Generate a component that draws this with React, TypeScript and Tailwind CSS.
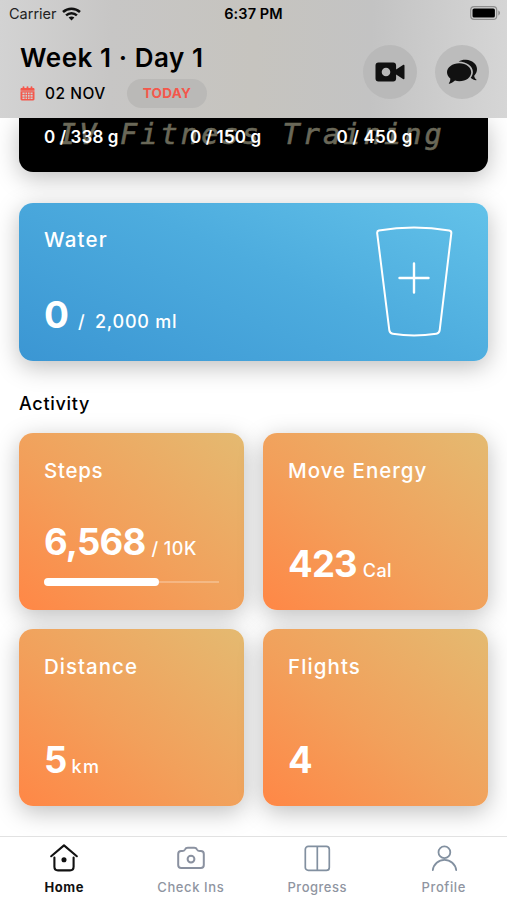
import type { ReactNode } from "react";
import clsx from "clsx";

interface Macro {
  label: string;
  className: string;
}

interface StatCardProps {
  title: string;
  titleClassName: string;
  children: ReactNode;
}

interface TabProps {
  label: string;
  labelClassName: string;
  active?: boolean;
  children: ReactNode;
}

const macros: Macro[] = [
  { label: "0 / 338 g", className: "w-[146px] tracking-[0.1px]" },
  { label: "0 / 150 g", className: "w-[146.5px] tracking-[0.1px]" },
  { label: "0 / 450 g", className: "tracking-[0.2px]" },
];

const steps = { value: 6568, goal: 10000 };

function WifiIcon() {
  return (
    <svg width="19" height="14" viewBox="0 0 19 14" fill="none" stroke="#111" strokeWidth="2.5">
      <path d="M1 5C5.8.5 13.2.5 18 5" />
      <path d="M4.1 8.3C7.2 5.4 11.8 5.4 14.9 8.3" />
      <path d="M9.5 13.6 6.6 10.6C8.3 9.2 10.7 9.2 12.4 10.6Z" fill="#111" stroke="none" />
    </svg>
  );
}

function BatteryIcon() {
  return (
    <svg width="31" height="14" viewBox="0 0 31 14">
      <rect x=".7" y=".7" width="26" height="12.6" rx="3.4" fill="none" stroke="#8e8e8e" strokeWidth="1.2" />
      <rect x="2.5" y="2.5" width="22.4" height="9" rx="1.6" fill="#000" />
      <path d="M28.3 4.6C30.6 5.4 30.6 8.6 28.3 9.4Z" fill="#8e8e8e" />
    </svg>
  );
}

function CalendarIcon() {
  return (
    <svg width="15" height="15" viewBox="0 0 15 15" fill="#f4574b">
      <path d="M.5 4.7V3.2C.5 2.4 1 2 1.7 2H2.6V.8C2.6 0 4.4 0 4.4.8V2H6.6V.8C6.6 0 8.4 0 8.4.8V2H10.6V.8C10.6 0 12.4 0 12.4.8V2H13.3C14 2 14.5 2.4 14.5 3.2V4.7Z" />
      <path
        fillRule="evenodd"
        d="M.5 5.3H14.5V13C14.5 13.9 14 14.4 13.2 14.4H1.8C1 14.4.5 13.9.5 13ZM2.4 6.6V8.3H4.6V6.6ZM5.5 6.6V8.3H7.1V6.6ZM8 6.6V8.3H9.6V6.6ZM10.5 6.6V8.3H12.6V6.6ZM2.4 9.1V10.7H4.6V9.1ZM5.5 9.1V10.7H7.1V9.1ZM8 9.1V10.7H9.6V9.1ZM10.5 9.1V10.7H12.6V9.1ZM2.4 11.5V13H4.6V11.5ZM5.5 11.5V13H7.1V11.5ZM8 11.5V13H9.6V11.5ZM10.5 11.5V13H12.6V11.5Z"
      />
    </svg>
  );
}

function VideoIcon() {
  return (
    <svg width="30" height="20" viewBox="0 0 30 20" fill="#111">
      <path
        fillRule="evenodd"
        d="M3.4.5H18.2C20 .5 21.1 1.6 21.1 3.4V7.6L28 3C28.9 2.4 29.5 2.8 29.5 3.8V16.2C29.5 17.2 28.9 17.6 28 17L21.1 12.4V16.6C21.1 18.4 20 19.5 18.2 19.5H3.4C1.6 19.5.5 18.4.5 16.6V3.4C.5 1.6 1.6.5 3.4.5ZM11 5.7A4.3 4.3 0 1 0 11 14.3 4.3 4.3 0 0 0 11 5.7Z"
      />
    </svg>
  );
}

function ChatIcon() {
  return (
    <svg width="32" height="26" viewBox="0 0 32 26" fill="#111">
      <path d="M13.3 4.2C20.2 4.2 25.2 8.2 25.2 13.2S20.2 22.2 13.3 22.2C11.7 22.2 10.3 22 9 21.6 7.4 23 5.3 24.4 3.3 24.7 2.8 24.7 2.7 24.3 3 24 4 22.7 4.4 21.2 4.3 19.5 2.4 17.9 1 15.7 1 13.2 1 8.2 6.4 4.2 13.3 4.2Z" />
      <path d="M12.6 2.5C14.8 1.2 17.4.5 20 .7 26.2 1.1 31 5 31 10 31 12.7 29.9 15 28.2 16.7 28.3 18.2 29 19.4 30.3 20.5 30.7 20.9 30.5 21.2 30 21.2 28.1 21.1 26.2 20.2 24.7 18.7 26.1 17.1 26.9 15.2 26.9 13 26.9 7.3 21 2.8 12.6 2.5Z" />
    </svg>
  );
}

function GlassIcon() {
  return (
    <svg width="78" height="112" viewBox="0 0 78 112" fill="none" stroke="#fff" strokeWidth="2" strokeLinecap="round">
      <path d="M3.8 4.5C27 .6 51 .6 74.2 4.5Q76.6 5 76.3 7.3L64.7 104.2Q64.3 107.3 61.3 107.8C47 110 31 110 17.7 107.8Q14.7 107.3 14.3 104.2L2.2 7.3Q1.9 5 3.8 4.5Z" />
      <path d="M39 37.5V66.5M24.5 52H53.5" strokeWidth="2.4" />
    </svg>
  );
}

function HomeIcon() {
  return (
    <svg width="28" height="28" viewBox="0 0 28 28" fill="none" stroke="#111" strokeWidth="2.1" strokeLinecap="round" strokeLinejoin="round">
      <path d="M1.2 12.2 14 1.4 26.8 12.2" />
      <path d="M4.4 13.5V22.8Q4.4 26.4 8 26.4H20Q23.6 26.4 23.6 22.8V13.5" />
      <circle cx="14" cy="15.7" r="1.5" fill="#111" />
    </svg>
  );
}

function CameraIcon() {
  return (
    <svg width="28" height="28" viewBox="0 0 28 28" fill="none" stroke="#8a91a0" strokeWidth="2" strokeLinejoin="round">
      <path d="M1.2 10Q1.2 7.1 4.2 7.1H5.2Q7.1 7.1 7.9 5.6 8.8 3.8 10.8 3.8H17.2Q19.2 3.8 20.1 5.6 20.9 7.1 22.8 7.1H23.8Q26.8 7.1 26.8 10V21Q26.8 24 23.8 24H4.2Q1.2 24 1.2 21Z" />
      <circle cx="14" cy="15.1" r="3.4" />
    </svg>
  );
}

function ProgressIcon() {
  return (
    <svg width="28" height="28" viewBox="0 0 28 28" fill="none" stroke="#8290a0" strokeWidth="1.7">
      <rect x="2.3" y="2.4" width="24" height="24" rx="3" />
      <path d="M14.3 2.4V26.4" />
    </svg>
  );
}

function ProfileIcon() {
  return (
    <svg width="28" height="28" viewBox="0 0 28 28" fill="none" stroke="#8290a0" strokeWidth="1.8" strokeLinecap="round">
      <circle cx="14.4" cy="8.3" r="5.9" />
      <path d="M2.8 26.1A11.8 11.8 0 0 1 26.2 26.1" />
    </svg>
  );
}

function StatCard({ title, titleClassName, children }: StatCardProps) {
  return (
    <section className="flex h-[177px] flex-col justify-between rounded-[14px] bg-linear-[38deg,#ff8746_0%,#f2a05b_45%,#e4ba71_100%] px-[25px] pt-[28px] text-white shadow-[0_6px_24px_rgba(0,0,0,0.26)]">
      <h3 className={clsx("text-[20.5px] leading-5 font-medium", titleClassName)}>{title}</h3>
      {children}
    </section>
  );
}

function Tab({ label, labelClassName, active, children }: TabProps) {
  return (
    <a
      className={clsx(
        "flex flex-1 flex-col items-center gap-[7px] pt-[7px] text-[13px] leading-4",
        active ? "font-bold text-[#111]" : "font-medium text-[#8f95a1]",
      )}
    >
      {children}
      <span className={labelClassName}>{label}</span>
    </a>
  );
}

export default function App() {
  return (
    <div className="flex h-[900px] w-[507px] flex-col overflow-hidden bg-white font-['Inter',sans-serif] text-black">
      <header className="relative z-10 h-[118px] shrink-0 bg-linear-[92deg,#d3d3d3_0%,#c7c6c5_22%,#c6c4bf_50%,#c3c3c3_73%,#d6d6d6_100%]">
        <div className="grid h-7 grid-cols-3 items-center">
          <div className="flex items-center gap-[5px] pl-[9px] text-[14.5px] text-[#222]">
            <span className="tracking-[0px]">Carrier</span>
            <WifiIcon />
          </div>
          <span className="text-center text-[14.5px] font-semibold tracking-[0.1px]">6:37 PM</span>
          <div className="flex justify-end pr-[6px] pb-[2px]">
            <BatteryIcon />
          </div>
        </div>
        <div className="flex justify-between pt-4 pr-[18px] pl-5">
          <div className="flex flex-col gap-2">
            <h1 className="text-[26px] leading-[27px] font-semibold tracking-[0.55px] whitespace-nowrap">
              Week 1 · Day 1
            </h1>
            <div className="flex items-center">
              <CalendarIcon />
              <span className="ml-[10px] w-[82px] text-[15.5px] font-medium tracking-[0.5px]">02 NOV</span>
              <span className="flex h-[29px] w-20 items-center justify-center rounded-full bg-[#bab9b7] text-[13.5px] font-bold tracking-[0.3px] text-[#f4574b]">
                TODAY
              </span>
            </div>
          </div>
          <div className="flex gap-[18.5px] pt-[0.5px]">
            <button className="flex size-[54px] items-center justify-center rounded-full bg-[#b9b9b9]">
              <VideoIcon />
            </button>
            <button className="flex size-[54px] items-center justify-center rounded-full bg-[#bcbcbc]">
              <ChatIcon />
            </button>
          </div>
        </div>
      </header>

      <main className="flex h-[718px] shrink-0 flex-col px-[19px]">
        <section className="relative h-[54px] shrink-0 rounded-b-[14px] bg-black pt-[9px] pl-[25px] shadow-[0_6px_24px_rgba(0,0,0,0.26)]">
          <span className="absolute top-0 left-[40px] font-['DejaVu_Sans_Mono',monospace] text-[28.5px] leading-[34px] tracking-[3.15px] whitespace-pre text-[#6a6858] italic [-webkit-text-stroke:0.6px_#6a6858]">
            IV Fitness Training
          </span>
          <div className="relative flex text-[17px] leading-5 font-semibold text-white">
            {macros.map((macro) => (
              <span key={macro.label} className={macro.className}>
                {macro.label}
              </span>
            ))}
          </div>
        </section>

        <section className="mt-[31px] flex h-[158px] shrink-0 justify-between rounded-[14px] bg-linear-[25deg,#3b96d3_0%,#4dacde_55%,#63c2e9_100%] pr-[35.5px] pl-[25px] text-white shadow-[0_6px_24px_rgba(0,0,0,0.26)]">
          <div className="flex flex-col justify-between pt-[27px] pb-[26px]">
            <h2 className="text-[20.5px] leading-5 font-medium tracking-[1.2px]">Water</h2>
            <div className="flex items-baseline leading-[40px]">
              <span className="w-[34px] text-[37px] font-bold">0</span>
              <span className="w-[17px] text-[18px] leading-none font-medium">/</span>
              <span className="text-[18px] leading-none font-medium tracking-[0.75px]">2,000 ml</span>
            </div>
          </div>
          <div className="pt-[23px]">
            <GlassIcon />
          </div>
        </section>

        <h2 className="mt-[32px] text-[18px] leading-[21px] font-medium tracking-[0.7px]">Activity</h2>

        <div className="mt-[19px] grid grid-cols-2 gap-[19px]">
          <StatCard title="Steps" titleClassName="tracking-[0.7px]">
            <div className="pb-[24px]">
              <div className="flex items-baseline gap-[6px] leading-[40px]">
                <span className="text-[36.5px] font-bold tracking-[-0.8px]">
                  {steps.value.toLocaleString("en-US")}
                </span>
                <span className="text-[18px] leading-none font-medium tracking-[0.5px]">/ 10K</span>
              </div>
              <div className="mt-[16px] flex h-[8px] items-center">
                <div
                  className="h-full rounded-full bg-white"
                  style={{ width: `${(steps.value / steps.goal) * 100}%` }}
                />
                <div className="h-[1.5px] flex-1 bg-white/25" />
              </div>
            </div>
          </StatCard>
          <StatCard title="Move Energy" titleClassName="tracking-[1px]">
            <div className="flex items-baseline gap-[6px] pb-[26px] leading-[40px]">
              <span className="text-[36.5px] font-bold tracking-[-0.8px]">423</span>
              <span className="text-[18px] leading-none font-medium tracking-[0.4px]">Cal</span>
            </div>
          </StatCard>
          <StatCard title="Distance" titleClassName="tracking-[1px]">
            <div className="flex items-baseline gap-[5px] pb-[26px] leading-[40px]">
              <span className="text-[36.5px] font-bold tracking-[-0.8px]">5</span>
              <span className="text-[18px] leading-none font-medium tracking-[1.4px]">km</span>
            </div>
          </StatCard>
          <StatCard title="Flights" titleClassName="tracking-[1.1px]">
            <div className="flex items-baseline pb-[26px] leading-[40px]">
              <span className="text-[36.5px] font-bold">4</span>
            </div>
          </StatCard>
        </div>
      </main>

      <nav className="relative z-10 flex h-16 shrink-0 border-t border-[#e2e2e2] bg-white pl-[1px]">
        <Tab label="Home" labelClassName="tracking-[0.5px]" active>
          <HomeIcon />
        </Tab>
        <Tab label="Check Ins" labelClassName="tracking-[0.6px]">
          <CameraIcon />
        </Tab>
        <Tab label="Progress" labelClassName="tracking-[0.5px]">
          <ProgressIcon />
        </Tab>
        <Tab label="Profile" labelClassName="tracking-[0.6px]">
          <ProfileIcon />
        </Tab>
      </nav>
    </div>
  );
}
